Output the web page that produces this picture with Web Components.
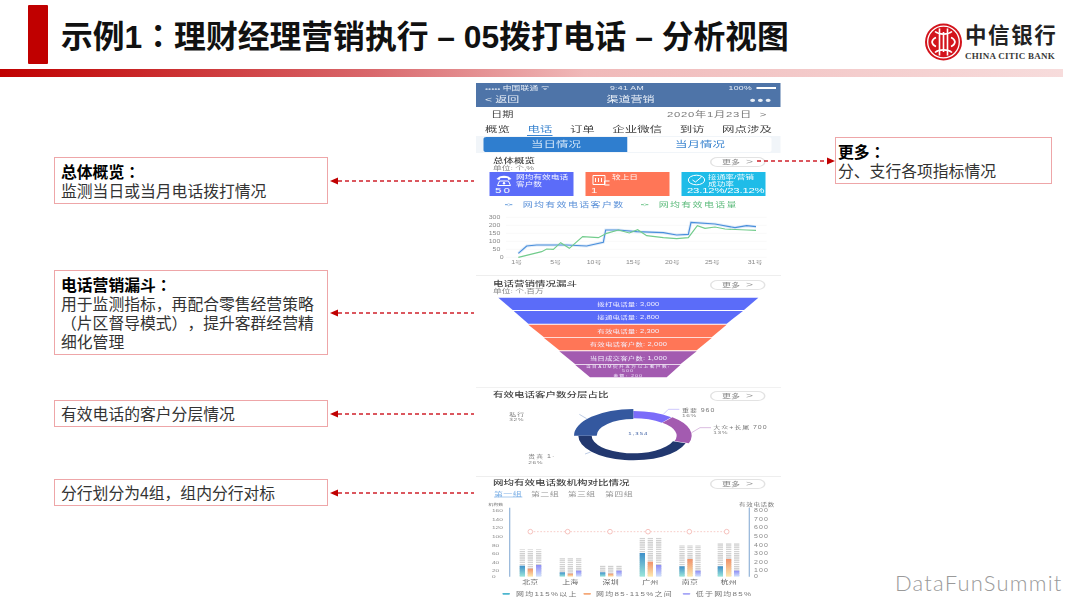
<!DOCTYPE html>
<html lang="zh">
<head>
<meta charset="utf-8">
<title>示例1</title>
<style>
    html, body { margin: 0; padding: 0; background: #fff; }
    body { font-family: "Liberation Sans", "Noto Sans CJK SC", sans-serif; }
</style>
</head>
<body>
<call-slide></call-slide>
<script>
const FONT = '"Liberation Sans", "Noto Sans CJK SC", sans-serif';
// the phone capture in the reference is stretched sideways, so its text is too
const STRETCH = 1.5;
const WIDE = `width: ${305 / STRETCH}px; transform: scaleX(${STRETCH}); transform-origin: 0 0;`;

class SlideHeader extends HTMLElement {
    constructor() {
        super();
        this.attachShadow({mode: 'open'}).innerHTML = `
        <style>
            :host { display: block; height: 78px; font-family: ${FONT}; }
            .top { display: flex; align-items: flex-start; height: 69px; padding-left: 28px; }
            .bar { width: 20px; height: 59px; margin-top: 5px; background: #c00000; border-radius: 1px; flex: none; }
            h1 { margin: 15px 0 0 13px; font-size: 31.800px; line-height: 38px; font-weight: 700; color: #111; white-space: nowrap; flex: 1; font-family: ${FONT}; text-spacing-trim: space-all; }
            h1 span { font-family: "Noto Sans CJK TC", sans-serif; }
            .logo { margin: 23px 20px 0 0; flex: none; }
            .rule { width: 1063px; height: 8px; background: linear-gradient(90deg, #c00000 0%, #d9686c 35%, #f0b9b9 55%, #f7dcdc 100%); }
        </style>
        <div class="top">
            <div class="bar"></div>
            <h1>示例1<span lang="zh-TW">：</span>理财经理营销执行 – 05拨打电话 – 分析视图</h1>
            <citic-logo class="logo"></citic-logo>
        </div>
        <div class="rule"></div>`;
    }
}

class CiticLogo extends HTMLElement {
    constructor() {
        super();
        this.attachShadow({mode: 'open'}).innerHTML = `
        <style>
            :host { display: flex; gap: 3px; width: 135px; }
            svg { flex: none; }
            .names { display: flex; flex-direction: column; }
            .cn { font: 700 21.5px/24px ${FONT}; letter-spacing: 1.6px; color: #222; white-space: nowrap; margin-top: 1px; }
            .en { font: 700 9px/12px "Liberation Serif", serif; letter-spacing: .25px; color: #3a3a3a; white-space: nowrap; margin-top: 2px; }
        </style>
        <svg width="37" height="38" viewBox="0 0 37 38">
            <circle cx="18.5" cy="19" r="18.5" fill="#d3141c"/>
            <g fill="none" stroke="#fff">
                <circle cx="18.5" cy="19" r="15.8" stroke-width="1.3"/>
                <path stroke-width="1.6" d="M14.500 5.500V32.500M18.500 9V29M22.500 5.500V32.500"/>
                <path stroke-width="1.6" d="M10 8.500c4 3.500 13 3.500 17 0M10 29.500c4-3.500 13-3.500 17 0"/>
                <path stroke-width="1.6" d="M11 14.500a6 6 0 0 0-4 4.500 6 6 0 0 0 4 4.500M26 14.500a6 6 0 0 1 4 4.500 6 6 0 0 1-4 4.500"/>
            </g>
        </svg>
        <div class="names">
            <span class="cn">中信银行</span>
            <span class="en">CHINA CITIC BANK</span>
        </div>`;
    }
}

class CallOut extends HTMLElement {
    constructor() {
        super();
        this.attachShadow({mode: 'open'}).innerHTML = `
        <style>
            :host { display: block; box-sizing: border-box; border: 1px solid #eea6a8; padding: 4px 6px 4px 6px; font: 15.8px/19px ${FONT}; color: #333; background: #fff; text-spacing-trim: space-all; }
            ::slotted(b) { color: #000; display: block; font-weight: 700; }
        </style>
        <slot></slot>`;
    }
}

class DashArrow extends HTMLElement {
    constructor() {
        super();
        let toRight = this.getAttribute('dir') === 'right';
        let w = +this.getAttribute('width');
        let line = toRight ? `M0 5H${w - 8}` : `M8 5H${w}`;
        let head = toRight ? `M${w} 5l-8-3.500v7z` : `M0 5l8-3.500v7z`;
        this.attachShadow({mode: 'open'}).innerHTML = `
        <style>
            :host { display: block; flex: none; height: 10px; line-height: 0; }
        </style>
        <svg width="${w}" height="10"><path d="${line}" stroke="#d0202a" stroke-width="1.400" stroke-dasharray="4 3"/><path d="${head}" fill="#c00000"/></svg>`;
    }
}

class MorePill extends HTMLElement {
    constructor() {
        super();
        this.attachShadow({mode: 'open'}).innerHTML = `
        <style>
            :host { display: flex; align-items: center; justify-content: center; gap: 4px; box-sizing: border-box; width: 36.670px; height: 10px; border: 1px solid #e3e3e3; border-radius: 5px; font: 6px/8px ${FONT}; color: #888; background: #fff; }
            i { font-style: normal; font-size: 8px; color: #999; }
        </style>
        <span>更多</span><i>&gt;</i>`;
    }
}

class SectionHead extends HTMLElement {
    constructor() {
        super();
        let unit = this.getAttribute('unit');
        this.attachShadow({mode: 'open'}).innerHTML = `
        <style>
            :host { display: flex; box-sizing: border-box; justify-content: space-between; align-items: flex-start; padding: 4px 10.670px 0 11.330px; font-family: ${FONT}; ${WIDE} }
            .t { font-size: 7px; line-height: 8px; color: #444; font-weight: 500; white-space: nowrap; }
            .u { font-size: 5.800px; line-height: 7px; color: #888; white-space: nowrap; }
        </style>
        <div>
            <div class="t">${this.getAttribute('title')}</div>
            ${unit ? `<div class="u">${unit}</div>` : ''}
        </div>
        <more-pill></more-pill>`;
    }
}

class StatTile extends HTMLElement {
    constructor() {
        super();
        let kind = this.getAttribute('kind');
        let icons = {
            phone: '<path d="M1 5c3-4.500 12-4.500 15 0l-3 1-1-2H5l-1 2z" fill="#fff"/><path d="M4 7h9l2 4.500H2z" fill="none" stroke="#fff"/><circle cx="8.500" cy="9.200" r="1.200" fill="#fff"/>',
            bill: '<path d="M1.500 1.500h12v9h-12zM4 4v4M7 4v4M10 4v4" fill="none" stroke="#fff"/><path d="M13 7h6v4h-6z" fill="none" stroke="#fff"/>',
            check: '<ellipse cx="9" cy="6" rx="8.200" ry="4.800" fill="none" stroke="#fff"/><path d="M5 6l3 2 6-5" fill="none" stroke="#fff"/>'
        };
        this.attachShadow({mode: 'open'}).innerHTML = `
        <style>
            :host { display: block; box-sizing: border-box; width: 55.330px; height: 24px; padding: 2px 0 0 3.330px; background: ${this.getAttribute('color')}; color: #fff; font-family: ${FONT}; overflow: hidden; }
            .r { display: flex; gap: 1.330px; height: 13px; }
            svg { flex: none; }
            .l { font-size: 5.800px; line-height: 6.500px; opacity: .92; white-space: nowrap; }
            .v { font: 7.500px/7px ${FONT}; letter-spacing: ${this.getAttribute('vs') || '1.500px'}; white-space: nowrap; }
        </style>
        <div class="r"><svg width="12.670" height="12" viewBox="0 0 19 12" preserveAspectRatio="none">${icons[kind]}</svg><div class="l"><slot></slot></div></div>
        <div class="v">${this.getAttribute('value')}</div>`;
    }
}

class PhoneTop extends HTMLElement {
    constructor() {
        super();
        this.attachShadow({mode: 'open'}).innerHTML = `
        <style>
            :host { display: block; font-family: ${FONT}; ${WIDE} }
            .nav { height: 24px; background: #4e74a8; color: #e8eef6; box-sizing: border-box; padding: 2px 3.330px 0 6px; }
            .st { display: grid; grid-template-columns: 83.300px 1fr auto; font: 5.800px/7px ${FONT}; letter-spacing: .2px; height: 7px; white-space: nowrap; }
            .st b { display: inline-block; width: 12.700px; height: 2px; background: #fff; vertical-align: 1px; margin-left: 3.300px; }
            .dots { font-size: 3.400px; letter-spacing: 0; margin-right: 1.500px; }
            .mn { display: grid; grid-template-columns: 1fr auto 1fr; align-items: center; margin-top: 2px; font-size: 8px; line-height: 12px; }
            .mn span:last-child { text-align: right; font-size: 11px; letter-spacing: 1.300px; font-weight: 700; padding-right: 2px; }
            .date { display: flex; justify-content: space-between; height: 14px; align-items: center; padding: 0 9.300px 2px 10px; color: #444; font-size: 7.500px; box-sizing: border-box; }
            .date span:last-child { color: #777; letter-spacing: .5px; }
            .tabs { display: flex; justify-content: space-between; height: 15px; padding: 1px 6px 0; font-size: 8.300px; color: #444; box-sizing: border-box; align-items: center; }
            .tabs span { line-height: 10px; padding: 1px 0 1px; }
            .tabs .on { color: #3c85cf; border-bottom: 1px solid #3c85cf; }
            .seg { display: flex; height: 17px; box-sizing: border-box; padding: 1px 6px 1px 5.330px; background: #f1f5f9; font-size: 8.300px; text-align: center; line-height: 15px; }
            .seg span { flex: 1; background: #fff; color: #3c85cf; border-radius: 0 2px 2px 0; }
            .seg .on { background: #2f7ecf; color: #cfe3f7; border-radius: 2px 0 0 2px; }
        </style>
        <div class="nav">
            <div class="st"><span><span class="dots">●●●●●</span>中国联通 ᯤ</span><span>9:41 AM</span><span>100%<b></b></span></div>
            <div class="mn"><span>&lt; 返回</span><span>渠道营销</span><span>•••</span></div>
        </div>
        <div class="date"><span>日期</span><span>2020年1月23日 &nbsp;&gt;</span></div>
        <div class="tabs"><span>概览</span><span class="on">电话</span><span>订单</span><span>企业微信</span><span>到访</span><span>网点涉及</span></div>
        <div class="seg"><span class="on">当日情况</span><span>当月情况</span></div>`;
    }
}

// the charts are drawn in a viewBox three times the pixel size, x=18 is the phone's left edge
function chartSvg(h, top, body) {
    let wide = body.replace(/<text x="([\d.]+)" y="([\d.]+)"/g, `<text transform="translate($1,$2) scale(${STRETCH},1)"`);
    return `<svg width="305" height="${h}" viewBox="18 ${top} 915 ${h * 3}" font-family='${FONT}' style="display:block">${wide}</svg>`;
}

class OverviewPanel extends HTMLElement {
    constructor() {
        super();
        const blue = [[145,175],[170,153],[200,150],[290,150],[350,153],[400,142],[407,105],[445,105],[500,110],[580,113],[620,120],[655,118],[663,82],[735,87],[795,98],[830,92],[858,95]];
        const green = [[145,187],[215,170],[230,162],[250,163],[272,143],[298,160],[338,125],[385,128],[410,115],[445,105],[478,114],[503,104],[530,122],[580,128],[620,131],[655,128],[682,92],[705,100],[735,96],[765,102],[830,105],[858,106]];
        const yl = ['300','200','150','100','50','0'];
        const xl = [['1号',140],['5号',257],['10号',372],['15号',490],['20号',607],['25号',727],['31号',855]];
        let grid = yl.map((t, i) => {
            let y = 67 + i * 24;
            let lx = t === '0' ? 101 : 91;
            return `<path d="M108 ${y}H890" stroke="#f2f2f2" stroke-width="1.500"/><text x="${lx}" y="${y + 5}" text-anchor="end" font-size="14" fill="#888">${t}</text>`;
        }).join('');
        let xs = xl.map(([t, x]) => `<text x="${x}" y="206" text-anchor="middle" font-size="14" fill="#888">${t}</text>`).join('');
        let pts = a => a.map(p => p.join(',')).join(' ');
        this.attachShadow({mode: 'open'}).innerHTML = `
        <style>
            :host { display: block; height: 123px; border-bottom: 1px solid #eee; box-sizing: border-box; }
            .tiles { display: flex; justify-content: space-between; box-sizing: border-box; padding: 0 10.670px 0 9.330px; margin-top: 1px; ${WIDE} }
            section-head { height: 18px; }
        </style>
        <section-head title="总体概览" unit="单位: 个,%"></section-head>
        <div class="tiles">
            <stat-tile color="#5b6cf9" kind="phone" value="50">网均有效电话<br>客户数</stat-tile>
            <stat-tile color="#ff7657" kind="bill" value="1">较上日</stat-tile>
            <stat-tile color="#1fbce8" kind="check" value="23.12%/23.12%" vs="-.1px">接通率/营销<br>成功率</stat-tile>
        </div>
        ${chartSvg(79, 3, `
            <path d="M105 29h22" stroke="#6a9fdc" stroke-width="3"/><circle cx="116" cy="29" r="3.500" fill="#fff" stroke="#6a9fdc"/>
            <text x="158" y="36" font-size="20" letter-spacing="2.670" fill="#5a90d8">网均有效电话客户数</text>
            <path d="M513 29h22" stroke="#6ec48a" stroke-width="3"/><circle cx="524" cy="29" r="3.500" fill="#fff" stroke="#6ec48a"/>
            <text x="566" y="36" font-size="20" letter-spacing="2.670" fill="#5dbb7c">网均有效电话量</text>
            ${grid}${xs}
            <polyline points="${pts(blue)}" fill="none" stroke="#c9dcf3" stroke-width="9" opacity=".55"/>
            <polyline points="${pts(blue)}" fill="none" stroke="#4a8fdc" stroke-width="3.500"/>
            <polyline points="${pts(green)}" fill="none" stroke="#72cc8c" stroke-width="3.500"/>
        `)}`;
    }
}

class FunnelPanel extends HTMLElement {
    constructor() {
        super();
        const rows = [
            [68,105,85,865,128,822,'#5b6cf9',['拨打电话量:  3,000']],
            [108,146,131,819,175,770,'#5b6cf9',['接通电话量:  2,800']],
            [149,187,175,770,222,725,'#ff7657',['有效电话量:  2,300']],
            [189,226,222,725,268,680,'#ff7657',['有效电话客户数:  2,000']],
            [229,267,268,680,315,632,'#a35bb0',['当日成交客户数:  1,000']],
            [269,307,315,632,360,590,'#a35bb0',['当日AUM提升五万以上客户数:','500','金额: 200']]
        ];
        let body = rows.map(([t,b,a,c,d,e,col,lines]) => {
            let txt;
            if (lines.length === 1) {
                txt = `<text x="475" y="${(t + b) / 2 + 6}" text-anchor="middle" font-size="15" letter-spacing=".3" fill="#f3f0ff">${lines[0]}</text>`;
            } else {
                txt = lines.map((l, i) => `<text x="475" y="${t + 10 + i * 13}" text-anchor="middle" font-size="9.500" letter-spacing="2.800" fill="#f3f0ff">${l}</text>`).join('');
            }
            return `<polygon points="${a},${t} ${c},${t} ${e},${b} ${d},${b}" fill="${col}"/>${txt}`;
        }).join('');
        this.attachShadow({mode: 'open'}).innerHTML = `
        <style>
            :host { display: block; position: relative; height: 112px; border-bottom: 1px solid #f1f1f1; box-sizing: border-box; }
            section-head { position: absolute; top: 0; left: 0; }
        </style>
        <section-head title="电话营销情况漏斗" unit="单位: 个,百万"></section-head>
        ${chartSvg(111, 3, body)}`;
    }
}

class DonutPanel extends HTMLElement {
    constructor() {
        super();
        const cx = 490, cy = 152;
        const arc = (a0, a1, rx, ry, ix, iy, col) => {
            let pt = (a, x, y) => [(cx + x * Math.sin(a * Math.PI / 180)).toFixed(1), (cy - y * Math.cos(a * Math.PI / 180)).toFixed(1)];
            let large = a1 - a0 > 180 ? 1 : 0;
            let [p0, p1, p2, p3] = [pt(a0, rx, ry), pt(a1, rx, ry), pt(a1, ix, iy), pt(a0, ix, iy)];
            return `<path fill="${col}" d="M${p0} A${rx} ${ry} 0 ${large} 1 ${p1} L${p2} A${ix} ${iy} 0 ${large} 0 ${p3}Z"/>`;
        };
        let body = arc(0, 42, 170, 74, 128, 52, '#7b6cf9')
            + arc(42, 108, 175, 74, 130, 52, '#a35bb0')
            + arc(108, 270, 165, 74, 125, 53, '#22386f')
            + arc(270, 360, 178, 80, 110, 50, '#34589f');
        let label = (x, y, a, b) => `<text x="${x}" y="${y}" font-size="14" letter-spacing="1.900" fill="#777">${a}</text><text x="${x}" y="${y + 16}" font-size="13" letter-spacing="1.300" fill="#777">${b}</text>`;
        let leader = (d, c) => `<path d="${d}" fill="none" stroke="${c}" stroke-width="2"/>`;
        this.attachShadow({mode: 'open'}).innerHTML = `
        <style>
            :host { display: block; position: relative; height: 89px; border-bottom: 1px solid #eee; box-sizing: border-box; }
            section-head { position: absolute; top: 0; left: 0; padding-top: 3px; }
        </style>
        <section-head title="有效电话客户数分层占比"></section-head>
        ${chartSvg(88, 9, `
            ${body}
            ${leader('M328 88l22 13','#9db4d8')}${leader('M345 207l17-6','#9db4d8')}
            ${leader('M580 88l15-15h33','#b7aefc')}${leader('M665 143l25-15h33','#c79bd0')}
            <text x="505" y="150" text-anchor="middle" font-size="12" letter-spacing="2" fill="#34589f">1,354</text>
            ${label(118,93,'私行','32%')}
            ${label(175,220,'贵宾 1·','26%')}
            ${label(636,81,'重要 960','16%')}
            ${label(730,132,'大众+长尾 700','13%')}
        `)}`;
    }
}

class BarsPanel extends HTMLElement {
    constructor() {
        super();
        const left = [['160',107],['140',132],['120',158],['100',184],['80',210],['60',235],['40',261],['20',287],['0',305]];
        const right = ['800','700','600','500','400','300','200','100','0'];
        const groups = [
            ['北京',[157,181,206],223,[272,281,270]],
            ['上海',[277,301,326],249,[292,296,287]],
            ['深圳',[398,422,447],270,[292,296,287]],
            ['广州',[517,541,566],186,[234,260,270]],
            ['南京',[636,660,684],211,[274,252,287]],
            ['杭州',[751,776,800],204,[274,252,287]]
        ];
        const fills = ['url(#g1)', 'url(#g2)', 'url(#g3)'];
        let axes = left.map(([t, y], i) =>
            `<text x="66" y="${y + 5}" font-size="13" fill="#888">${t}</text>` +
            `<text x="852" y="${y + 5}" font-size="14" letter-spacing="2.200" fill="#888">${right[i]}</text>`).join('');
        let bars = groups.map(([name, xs, top, tops]) => xs.map((x, i) =>
            `<rect x="${x - 8}" y="${top}" width="16" height="${305 - top}" fill="url(#st)"/>` +
            `<rect x="${x - 8}" y="${tops[i]}" width="16" height="${305 - tops[i]}" fill="${fills[i]}"/>`).join('') +
            `<text x="${xs[1]}" y="328" text-anchor="middle" font-size="16" letter-spacing=".3" fill="#666">${name}</text>`).join('');
        let marks = [181,293,420,534,658,770].map(x => `<circle cx="${x}" cy="170" r="7" fill="#fff" stroke="#f2a6a0" stroke-width="2"/>`).join('');
        let legend = [
            [97,'#4cb6cf',138,'网均115%以上'],
            [340,'#f5a878',378,'网均85-115%之间'],
            [638,'#a6a6f7',677,'低于网均85%']
        ].map(([x, c, tx, t]) => `<rect x="${x}" y="354" width="23" height="5" rx="2.500" fill="${c}"/><text x="${tx}" y="363" font-size="16" letter-spacing="2.500" fill="#777">${t}</text>`).join('');
        let tabs = [[72,'第一组','#7db0e6'],[183,'第二组','#999'],[293,'第三组','#999'],[405,'第四组','#999']]
            .map(([x, t, c]) => `<text x="${x}" y="62" font-size="18" letter-spacing=".7" fill="${c}">${t}</text>`).join('');
        this.attachShadow({mode: 'open'}).innerHTML = `
        <style>
            :host { display: block; position: relative; height: 131px; overflow: hidden; }
            section-head { position: absolute; top: 0; left: 0; padding-top: 2px; }
        </style>
        <section-head title="网均有效电话数机构对比情况"></section-head>
        ${chartSvg(131, 6, `
            <defs>
                <pattern id="st" width="6" height="6.500" patternUnits="userSpaceOnUse"><rect width="6" height="4" fill="#cfcfcf"/></pattern>
                <linearGradient id="g1" x1="0" y1="0" x2="0" y2="1"><stop offset="0" stop-color="#3d8fc9"/><stop offset="1" stop-color="#9be6da"/></linearGradient>
                <linearGradient id="g2" x1="0" y1="0" x2="0" y2="1"><stop offset="0" stop-color="#f0916a"/><stop offset="1" stop-color="#fdeab0"/></linearGradient>
                <linearGradient id="g3" x1="0" y1="0" x2="0" y2="1"><stop offset="0" stop-color="#8d8cf6"/><stop offset="1" stop-color="#d3e3fb"/></linearGradient>
            </defs>
            ${tabs}
            <path d="M72 66H157" stroke="#7db0e6" stroke-width="2"/>
            <text x="55" y="92" font-size="10" fill="#777">机构数</text>
            <text x="807" y="92" font-size="13" letter-spacing="1.400" fill="#777">有效电话数</text>
            <path d="M119 98V305M838 98V305" stroke="#9dbbdc" stroke-width="4"/>
            ${axes}${bars}
            <path d="M181 170H770" stroke="#f4b5ae" stroke-width="2" stroke-dasharray="5 5"/>
            ${marks}${legend}
        `)}`;
    }
}

class CallSlide extends HTMLElement {
    constructor() {
        super();
        this.attachShadow({mode: 'open'}).innerHTML = `
        <style>
            :host { display: block; position: relative; width: 1080px; height: 608px; overflow: hidden; background: #fff; font-family: ${FONT}; }
            .main { display: flex; align-items: flex-start; height: 530px; }
            .notes { flex: none; display: flex; flex-direction: column; width: 476px; padding: 79px 0 0 54px; box-sizing: border-box; }
            .row { display: flex; align-items: center; gap: 2px; }
            .row call-out { width: 274px; flex: none; }
            .r1 call-out { height: 47px; }
            .r2 { margin-top: 66px; }
            .r2 call-out { height: 85px; }
            .r3 { margin-top: 45px; }
            .r3 call-out, .r4 call-out { height: 27px; }
            .r4 { margin-top: 52px; }
            b span { font-family: "Noto Sans CJK TC", sans-serif; }
            .phone { flex: none; width: 305px; margin-top: 5px; height: 525px; overflow: hidden; filter: blur(.45px); }
            .more { display: flex; align-items: center; margin: 59px 0 0 -24px; position: relative; z-index: 1; }
            .more call-out { width: 217px; height: 47px; padding-left: 2px; }
            .mark { position: absolute; left: 895px; top: 569px; font: 300 22px/28px Lato, "Open Sans", sans-serif; letter-spacing: 1.200px; color: #9a9a9a; }
        </style>
        <slide-header></slide-header>
        <div class="main">
            <div class="notes">
                <div class="row r1"><call-out><b>总体概览<span lang="zh-TW">：</span></b>监测当日或当月电话拨打情况</call-out><dash-arrow width="144"></dash-arrow></div>
                <div class="row r2"><call-out><b>电话营销漏斗<span lang="zh-TW">：</span></b>用于监测指标，再配合零售经营策略（片区督导模式），提升客群经营精细化管理</call-out><dash-arrow width="144"></dash-arrow></div>
                <div class="row r3"><call-out>有效电话的客户分层情况</call-out><dash-arrow width="144"></dash-arrow></div>
                <div class="row r4"><call-out>分行划分为4组，组内分行对标</call-out><dash-arrow width="144"></dash-arrow></div>
            </div>
            <div class="phone">
                <phone-top></phone-top>
                <overview-panel></overview-panel>
                <funnel-panel></funnel-panel>
                <donut-panel></donut-panel>
                <bars-panel></bars-panel>
            </div>
            <div class="more">
                <dash-arrow width="78" dir="right"></dash-arrow>
                <call-out><b>更多<span lang="zh-TW">：</span></b>分、支行各项指标情况</call-out>
            </div>
        </div>
        <div class="mark">DataFunSummit</div>`;
    }
}

customElements.define('citic-logo', CiticLogo);
customElements.define('slide-header', SlideHeader);
customElements.define('call-out', CallOut);
customElements.define('dash-arrow', DashArrow);
customElements.define('more-pill', MorePill);
customElements.define('section-head', SectionHead);
customElements.define('stat-tile', StatTile);
customElements.define('phone-top', PhoneTop);
customElements.define('overview-panel', OverviewPanel);
customElements.define('funnel-panel', FunnelPanel);
customElements.define('donut-panel', DonutPanel);
customElements.define('bars-panel', BarsPanel);
customElements.define('call-slide', CallSlide);
</script>
</body>
</html>
